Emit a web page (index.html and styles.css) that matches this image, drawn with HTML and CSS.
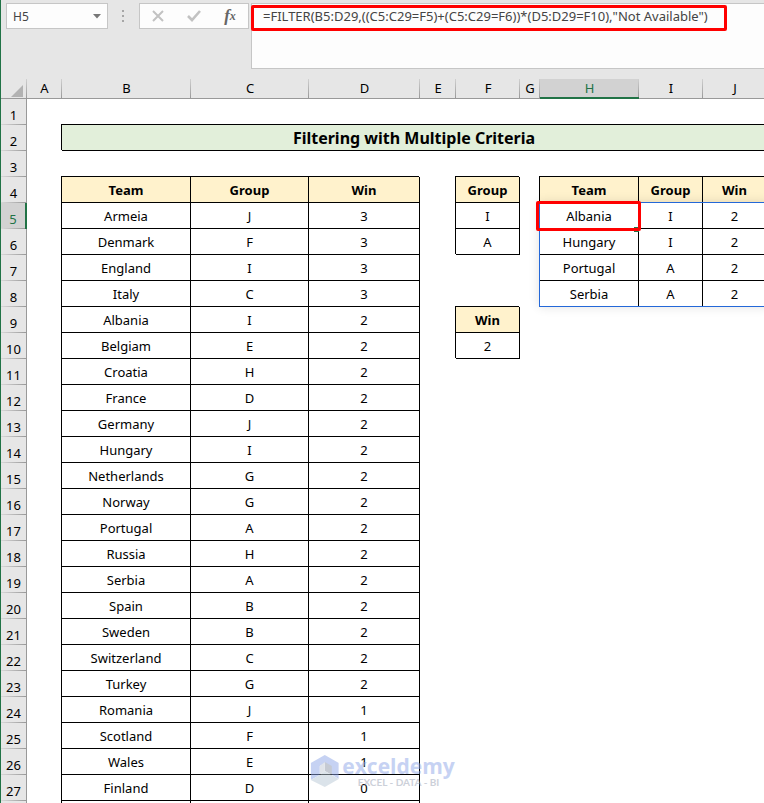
FILE: index.html
```html
<!DOCTYPE html>
<html lang="en">
  <head>
    <meta charset="UTF-8" />
    <meta name="viewport" content="width=device-width, initial-scale=1.0" />
    <title>Filtering with Multiple Criteria</title>
    <link rel="stylesheet" href="styles.css">
  </head>
  <body>
    <!-- Formula bar -->
    <div class="formula-bar">
      <div class="name-box">
        <input type="text" value="H5" aria-label="Name box" />
        <button type="button" aria-label="Open name list">
          <svg width="8" height="5" viewBox="0 0 8 5"><path d="M0 0h8L4 4.5z" fill="#777" /></svg>
        </button>
      </div>
      <svg class="grip" width="3" height="12" viewBox="0 0 3 12" fill="#a6a6a6">
        <path d="M0 0h2v2H0zM0 5h2v2H0zM0 10h2v2H0z" />
      </svg>
      <div class="actions">
        <button type="button" aria-label="Cancel">
          <svg width="12" height="12" viewBox="0 0 12 12"><path d="M1 1l10 10M11 1L1 11" fill="none" stroke="#c2c2c2" stroke-width="2" /></svg>
        </button>
        <button type="button" aria-label="Enter">
          <svg width="14" height="12" viewBox="0 0 14 12"><path d="M1 6l4 4 8-9" fill="none" stroke="#c2c2c2" stroke-width="2.6" /></svg>
        </button>
        <button type="button" class="fx" aria-label="Insert function"><i>f</i><sub>x</sub></button>
      </div>
      <div class="formula">
        <textarea aria-label="Formula" spellcheck="false">=FILTER(B5:D29,((C5:C29=F5)+(C5:C29=F6))*(D5:D29=F10),"Not Available")</textarea>
        <div class="formula-mark"></div>
      </div>
    </div>

    <!-- Worksheet -->
    <table class="sheet">
      <colgroup>
        <col class="col-num" /><col class="col-a" /><col class="col-b" /><col class="col-c" /><col class="col-d" /><col class="col-e" />
        <col class="col-f" /><col class="col-g" /><col class="col-h" /><col class="col-i" /><col class="col-j" />
      </colgroup>
      <thead>
        <tr>
          <th class="corner"><svg width="12" height="12" viewBox="0 0 12 12"><path d="M12 0v12H0z" fill="#b2b2b2" /></svg></th>
          <th>A</th><th>B</th><th>C</th><th>D</th><th>E</th><th>F</th><th>G</th><th class="active">H</th><th>I</th><th>J</th>
        </tr>
      </thead>
      <tbody>
        <tr><th>1</th><td colspan="10"></td></tr>
        <tr><th>2</th><td></td><td class="box title" colspan="9">Filtering with Multiple Criteria</td></tr>
        <tr><th>3</th><td colspan="10"></td></tr>
        <tr>
          <th>4</th><td></td><td class="box head">Team</td><td class="box head">Group</td><td class="box head">Win</td>
          <td></td><td class="box head">Group</td><td></td><td class="box head">Team</td><td class="box head">Group</td><td class="box head">Win</td>
        </tr>
        <tr>
          <th class="active">5</th><td></td><td class="box">Armeia</td><td class="box">J</td><td class="box">3</td>
          <td></td><td class="box">I</td><td></td>
          <td class="box selected">Albania<div class="spill"></div><div class="handle"></div><div class="cell-mark"></div></td><td class="box">I</td><td class="box">2</td>
        </tr>
        <tr>
          <th>6</th><td></td><td class="box">Denmark</td><td class="box">F</td><td class="box">3</td>
          <td></td><td class="box">A</td><td></td><td class="box">Hungary</td><td class="box">I</td><td class="box">2</td>
        </tr>
        <tr>
          <th>7</th><td></td><td class="box">England</td><td class="box">I</td><td class="box">3</td>
          <td></td><td></td><td></td><td class="box">Portugal</td><td class="box">A</td><td class="box">2</td>
        </tr>
        <tr>
          <th>8</th><td></td><td class="box">Italy</td><td class="box">C</td><td class="box">3</td>
          <td></td><td></td><td></td><td class="box">Serbia</td><td class="box">A</td><td class="box">2</td>
        </tr>
        <tr><th>9</th><td></td><td class="box">Albania</td><td class="box">I</td><td class="box">2</td><td></td><td class="box head">Win</td><td colspan="4"></td></tr>
        <tr><th>10</th><td></td><td class="box">Belgiam</td><td class="box">E</td><td class="box">2</td><td></td><td class="box">2</td><td colspan="4"></td></tr>
        <tr><th>11</th><td></td><td class="box">Croatia</td><td class="box">H</td><td class="box">2</td><td colspan="6"></td></tr>
        <tr><th>12</th><td></td><td class="box">France</td><td class="box">D</td><td class="box">2</td><td colspan="6"></td></tr>
        <tr><th>13</th><td></td><td class="box">Germany</td><td class="box">J</td><td class="box">2</td><td colspan="6"></td></tr>
        <tr><th>14</th><td></td><td class="box">Hungary</td><td class="box">I</td><td class="box">2</td><td colspan="6"></td></tr>
        <tr><th>15</th><td></td><td class="box">Netherlands</td><td class="box">G</td><td class="box">2</td><td colspan="6"></td></tr>
        <tr><th>16</th><td></td><td class="box">Norway</td><td class="box">G</td><td class="box">2</td><td colspan="6"></td></tr>
        <tr><th>17</th><td></td><td class="box">Portugal</td><td class="box">A</td><td class="box">2</td><td colspan="6"></td></tr>
        <tr><th>18</th><td></td><td class="box">Russia</td><td class="box">H</td><td class="box">2</td><td colspan="6"></td></tr>
        <tr><th>19</th><td></td><td class="box">Serbia</td><td class="box">A</td><td class="box">2</td><td colspan="6"></td></tr>
        <tr><th>20</th><td></td><td class="box">Spain</td><td class="box">B</td><td class="box">2</td><td colspan="6"></td></tr>
        <tr><th>21</th><td></td><td class="box">Sweden</td><td class="box">B</td><td class="box">2</td><td colspan="6"></td></tr>
        <tr><th>22</th><td></td><td class="box">Switzerland</td><td class="box">C</td><td class="box">2</td><td colspan="6"></td></tr>
        <tr><th>23</th><td></td><td class="box">Turkey</td><td class="box">G</td><td class="box">2</td><td colspan="6"></td></tr>
        <tr><th>24</th><td></td><td class="box">Romania</td><td class="box">J</td><td class="box">1</td><td colspan="6"></td></tr>
        <tr><th>25</th><td></td><td class="box">Scotland</td><td class="box">F</td><td class="box">1</td><td colspan="6"></td></tr>
        <tr><th>26</th><td></td><td class="box">Wales</td><td class="box">E</td><td class="box">1</td><td colspan="6"></td></tr>
        <tr><th>27</th><td></td><td class="box">Finland</td><td class="box">D</td><td class="box">0</td><td colspan="6"></td></tr>
        <tr><th></th><td></td><td class="box"></td><td class="box"></td><td class="box"></td><td colspan="6"></td></tr>
      </tbody>
    </table>

    <!-- Watermark -->
    <div class="watermark">
      <svg width="28" height="32" viewBox="0 0 28 32">
        <path d="M14 0l14 8v16l-8-5v-7l-6-4-5 3v9L0 25V8z" fill="#8ea6e8" />
        <path d="M14 7l7 4v9l-7-4z" fill="#8d97a8" />
        <path d="M14 7l-5 4v9l5-4z" fill="#c3cad6" />
        <path d="M0 25l9-5 5-4 14 8-14 8z" fill="#b9c9d6" />
      </svg>
      <div class="brand">
        <strong>exceldemy</strong>
        <span>EXCEL - DATA - BI</span>
      </div>
    </div>
  </body>
</html>
```
FILE: styles.css
```css
* {
  box-sizing: border-box;
}

body {
  margin: 0;
  position: relative;
  height: 100vh;
  overflow: hidden;
  background: #fff;
  border-left: 1px solid #217346;
  font-family: "Noto Sans", "Open Sans", sans-serif;
  font-size: 13px;
  color: #000;
}

button,
input,
textarea {
  margin: 0;
  padding: 0;
  border: none;
  outline: none;
  background: transparent;
  font: inherit;
  color: #444;
}

/* formula bar */
.formula-bar {
  display: flex;
  align-items: flex-start;
  height: 79px;
  padding: 3px 0 10px 5px;
  background: #e6e6e6;
}

.name-box,
.actions {
  display: flex;
  align-items: center;
  height: 26px;
  border: 1px solid #c6c6c6;
  background: #fdfdfd;
}

.name-box {
  width: 102px;
  padding: 0 6px;
}

.name-box input {
  flex: 1;
  min-width: 0;
  font-size: 12px;
}

.name-box button {
  display: flex;
}

.grip {
  margin: 7px 14px 0;
}

.actions {
  width: 110px;
  justify-content: space-around;
}

.actions button {
  display: flex;
  align-items: center;
  justify-content: center;
  width: 28px;
  height: 24px;
}

.actions .fx {
  font-family: "Liberation Serif", serif;
  font-size: 17px;
  font-weight: bold;
  color: #666;
}

.fx sub {
  font-size: 12px;
  font-style: italic;
}

.formula {
  position: relative;
  flex: 1;
  height: 66px;
  margin-left: 2px;
  border: 1px solid #c6c6c6;
  border-right: none;
  background: #fdfdfd;
}

.formula textarea {
  display: block;
  width: 100%;
  height: 100%;
  padding: 2px 11px;
  resize: none;
  line-height: 20px;
}

.formula-mark {
  position: absolute;
  top: 1px;
  left: -1px;
  width: 476px;
  height: 26px;
  border: 3px solid #f00;
  border-radius: 2px;
  pointer-events: none;
}

/* worksheet grid */
.sheet {
  width: 765px;
  table-layout: fixed;
  border-collapse: separate;
  border-spacing: 0;
}

.col-num { width: 26px; }
.col-a { width: 35px; }
.col-b { width: 129px; }
.col-c { width: 118px; }
.col-d { width: 111px; }
.col-e { width: 36px; }
.col-f { width: 64px; }
.col-g { width: 20px; }
.col-h { width: 99px; }
.col-i { width: 64px; }
.col-j { width: 64px; }

.sheet th,
.sheet td {
  height: 26px;
  padding: 0;
  text-align: center;
  line-height: 20px;
}

.sheet th {
  background: #e6e6e6;
  font-weight: normal;
}

.sheet thead th {
  height: 20px;
  border-bottom: 1px solid #999;
  background: linear-gradient(#d0d0d0, #999) right / 1px 100% no-repeat #e6e6e6;
  line-height: 19px;
}

.sheet thead .corner {
  padding: 4px 4px 0 0;
  text-align: right;
  line-height: 0;
}

.sheet tbody th {
  padding-top: 5px;
  border-right: 1px solid #999;
  background: linear-gradient(to right, #d8d8d8, #999) bottom / 100% 1px no-repeat #e6e6e6;
}

.sheet thead .active {
  border-bottom: 2px solid #217346;
  background-color: #d2d2d2;
  color: #217346;
  line-height: 18px;
}

.sheet tbody .active {
  border-right: 2px solid #217346;
  background-color: #d2d2d2;
  color: #217346;
}

/* the shadow closes the box on its top and left sides */
.box {
  border-right: 1px solid #000;
  border-bottom: 1px solid #000;
  box-shadow: -1px -1px 0 #000;
}

.sheet .head {
  background: #fff2cc;
  font-weight: bold;
}

.sheet .title {
  background: #e2efda;
  font-size: 16px;
  font-weight: bold;
}

.selected {
  position: relative;
}

.spill {
  position: absolute;
  z-index: 1;
  top: -1px;
  left: -1px;
  width: 230px;
  height: 105px;
  border: 1px solid #2468d8;
  box-shadow: 0 0 10px rgba(0, 0, 0, 0.12);
}

.cell-mark {
  position: absolute;
  z-index: 3;
  inset: -2px -3px -3px -4px;
  border: 3px solid #f00;
  border-radius: 2px;
}

.handle {
  position: absolute;
  z-index: 2;
  right: -1px;
  bottom: -4px;
  width: 5px;
  height: 5px;
  background: #217346;
}

/* watermark */
.watermark {
  position: absolute;
  left: 50%;
  bottom: 16px;
  display: flex;
  gap: 4px;
  transform: translateX(-50%);
  opacity: 0.5;
}

.brand {
  text-align: center;
}

.brand strong,
.brand span {
  display: block;
}

.brand strong {
  font-family: "Open Sans", sans-serif;
  font-size: 21px;
  line-height: 22px;
  color: #8ea6e8;
}

.brand span {
  font-family: Lato, sans-serif;
  font-size: 10px;
  font-weight: bold;
  line-height: 10px;
  color: #9aa3b5;
}
```
